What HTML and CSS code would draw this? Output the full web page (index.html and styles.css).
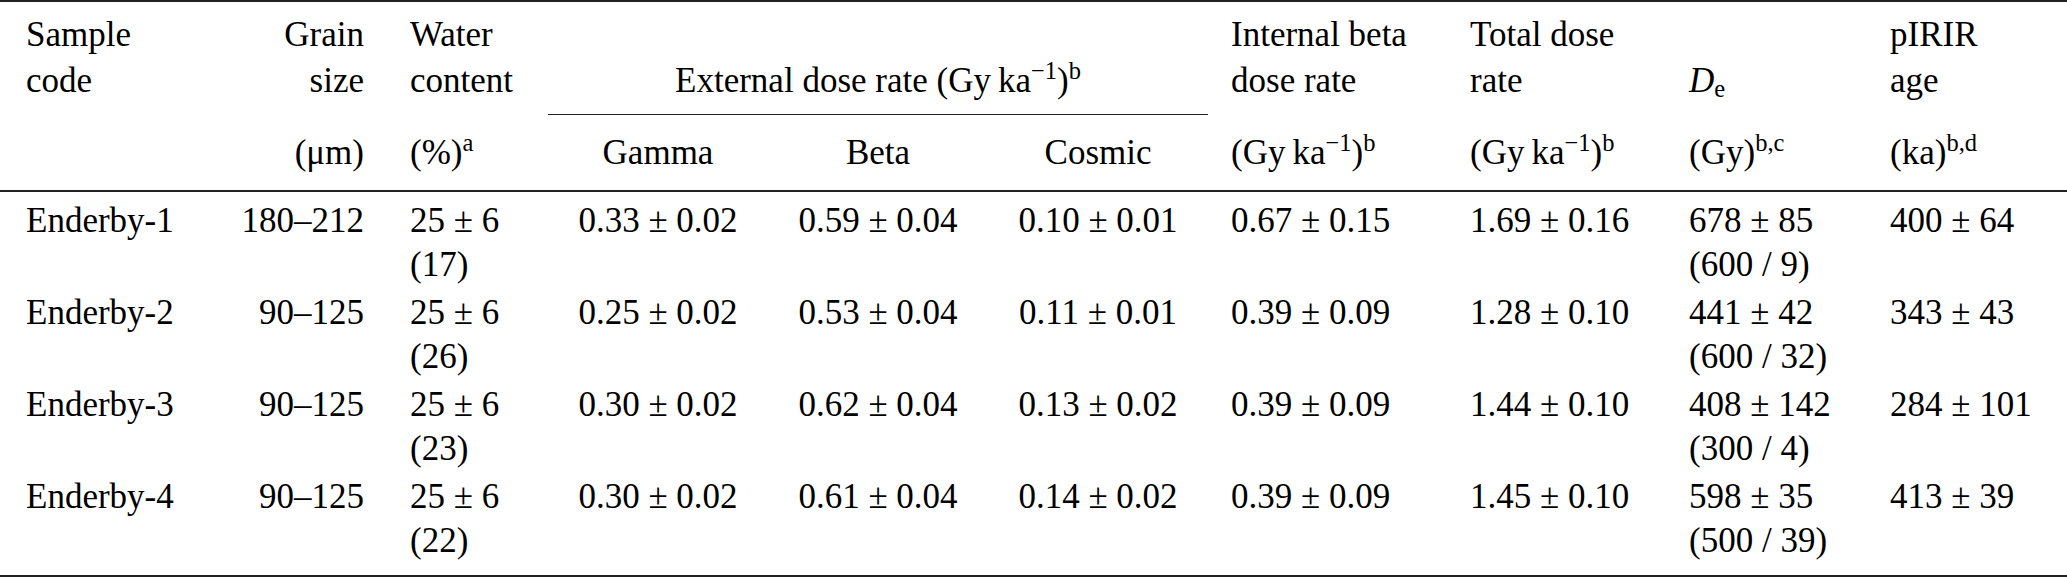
FILE: index.html
```html
<!DOCTYPE html>
<html lang="en">
<head>
<meta charset="utf-8">
<title>Dose rates and pIRIR ages</title>
<link rel="stylesheet" href="styles.css">
</head>
<body>
<table class="dose-table">
  <colgroup>
    <col class="w-sample">
    <col class="w-grain">
    <col class="w-water">
    <col class="w-ext">
    <col class="w-ext">
    <col class="w-ext">
    <col class="w-internal">
    <col class="w-total">
    <col class="w-de">
    <col class="w-age">
  </colgroup>
  <thead>
    <tr class="head-a">
      <th class="al">Sample<br>code</th>
      <th class="ar">Grain<br>size</th>
      <th class="al">Water<br>content</th>
      <th colspan="3" class="ac ext bottom">External dose rate (Gy&#8201;ka<span class="sup">−1</span>)<span class="sup">b</span></th>
      <th class="al">Internal beta<br>dose rate</th>
      <th class="al">Total dose<br>rate</th>
      <th class="al bottom"><i>D</i><span class="sub">e</span></th>
      <th class="al">pIRIR<br>age</th>
    </tr>
    <tr class="head-b">
      <th class="al"></th>
      <th class="ar">(μm)</th>
      <th class="al">(%)<span class="sup">a</span></th>
      <th class="ac">Gamma</th>
      <th class="ac">Beta</th>
      <th class="ac">Cosmic</th>
      <th class="al">(Gy&#8201;ka<span class="sup">−1</span>)<span class="sup">b</span></th>
      <th class="al">(Gy&#8201;ka<span class="sup">−1</span>)<span class="sup">b</span></th>
      <th class="al">(Gy)<span class="sup">b,c</span></th>
      <th class="al">(ka)<span class="sup">b,d</span></th>
    </tr>
  </thead>
  <tbody>
    <tr>
      <td class="al">Enderby-1</td>
      <td class="ar">180–212</td>
      <td class="al">25 ± 6<br>(17)</td>
      <td class="ac">0.33 ± 0.02</td>
      <td class="ac">0.59 ± 0.04</td>
      <td class="ac">0.10 ± 0.01</td>
      <td class="al">0.67 ± 0.15</td>
      <td class="al">1.69 ± 0.16</td>
      <td class="al">678 ± 85<br>(600 / 9)</td>
      <td class="al">400 ± 64</td>
    </tr>
    <tr>
      <td class="al">Enderby-2</td>
      <td class="ar">90–125</td>
      <td class="al">25 ± 6<br>(26)</td>
      <td class="ac">0.25 ± 0.02</td>
      <td class="ac">0.53 ± 0.04</td>
      <td class="ac">0.11 ± 0.01</td>
      <td class="al">0.39 ± 0.09</td>
      <td class="al">1.28 ± 0.10</td>
      <td class="al">441 ± 42<br>(600 / 32)</td>
      <td class="al">343 ± 43</td>
    </tr>
    <tr>
      <td class="al">Enderby-3</td>
      <td class="ar">90–125</td>
      <td class="al">25 ± 6<br>(23)</td>
      <td class="ac">0.30 ± 0.02</td>
      <td class="ac">0.62 ± 0.04</td>
      <td class="ac">0.13 ± 0.02</td>
      <td class="al">0.39 ± 0.09</td>
      <td class="al">1.44 ± 0.10</td>
      <td class="al">408 ± 142<br>(300 / 4)</td>
      <td class="al">284 ± 101</td>
    </tr>
    <tr>
      <td class="al">Enderby-4</td>
      <td class="ar">90–125</td>
      <td class="al">25 ± 6<br>(22)</td>
      <td class="ac">0.30 ± 0.02</td>
      <td class="ac">0.61 ± 0.04</td>
      <td class="ac">0.14 ± 0.02</td>
      <td class="al">0.39 ± 0.09</td>
      <td class="al">1.45 ± 0.10</td>
      <td class="al">598 ± 35<br>(500 / 39)</td>
      <td class="al">413 ± 39</td>
    </tr>
  </tbody>
</table>
</body>
</html>
```
FILE: styles.css
```css
html, body {
  margin: 0;
  padding: 0;
  background: #ffffff;
  font-family: "Liberation Serif", serif;
}

.dose-table {
  width: 2067px;
  table-layout: fixed;
  border-collapse: separate;
  border-spacing: 0;
  font-family: "Liberation Serif", "Times New Roman", serif;
  font-size: 35px;
  color: #000000;
  border-top: 2px solid #222222;
  border-bottom: 2px solid #222222;
}

.w-sample { width: 200px; }
.w-grain { width: 187px; }
.w-water { width: 161px; }
.w-ext { width: 220px; }
.w-internal { width: 239px; }
.w-total { width: 219px; }
.w-de { width: 201px; }
.w-age { width: 200px; }

.dose-table th,
.dose-table td {
  font-family: "Liberation Serif", "Times New Roman", serif;
  font-weight: normal;
  vertical-align: top;
  white-space: nowrap;
  padding: 0;
}

.al { text-align: left; }
.ar { text-align: right; }
.ac { text-align: center; }

.dose-table .al { padding-left: 23px; }
.dose-table .ar { padding-right: 23px; }
.dose-table tr > :first-child.al { padding-left: 26px; }

.head-a th {
  line-height: 46px;
  padding-top: 10px;
  padding-bottom: 10px;
  border-bottom: 1px solid transparent;
}

.head-a th.bottom {
  vertical-align: bottom;
}

.head-a th.ext {
  border-bottom-color: #222222;
}

.head-b th {
  line-height: 44px;
  padding-top: 16px;
  padding-bottom: 15px;
  border-bottom: 2px solid #222222;
}

.dose-table tbody td {
  line-height: 44px;
  padding-top: 2px;
  padding-bottom: 2px;
}

.dose-table tbody tr:first-child td {
  padding-top: 7px;
}

.dose-table tbody tr:last-child td {
  padding-bottom: 12px;
}

.sup {
  font-size: 0.7em;
  line-height: 0;
  vertical-align: 0.55em;
}

.sub {
  font-size: 0.7em;
  line-height: 0;
  vertical-align: -0.22em;
}
```
